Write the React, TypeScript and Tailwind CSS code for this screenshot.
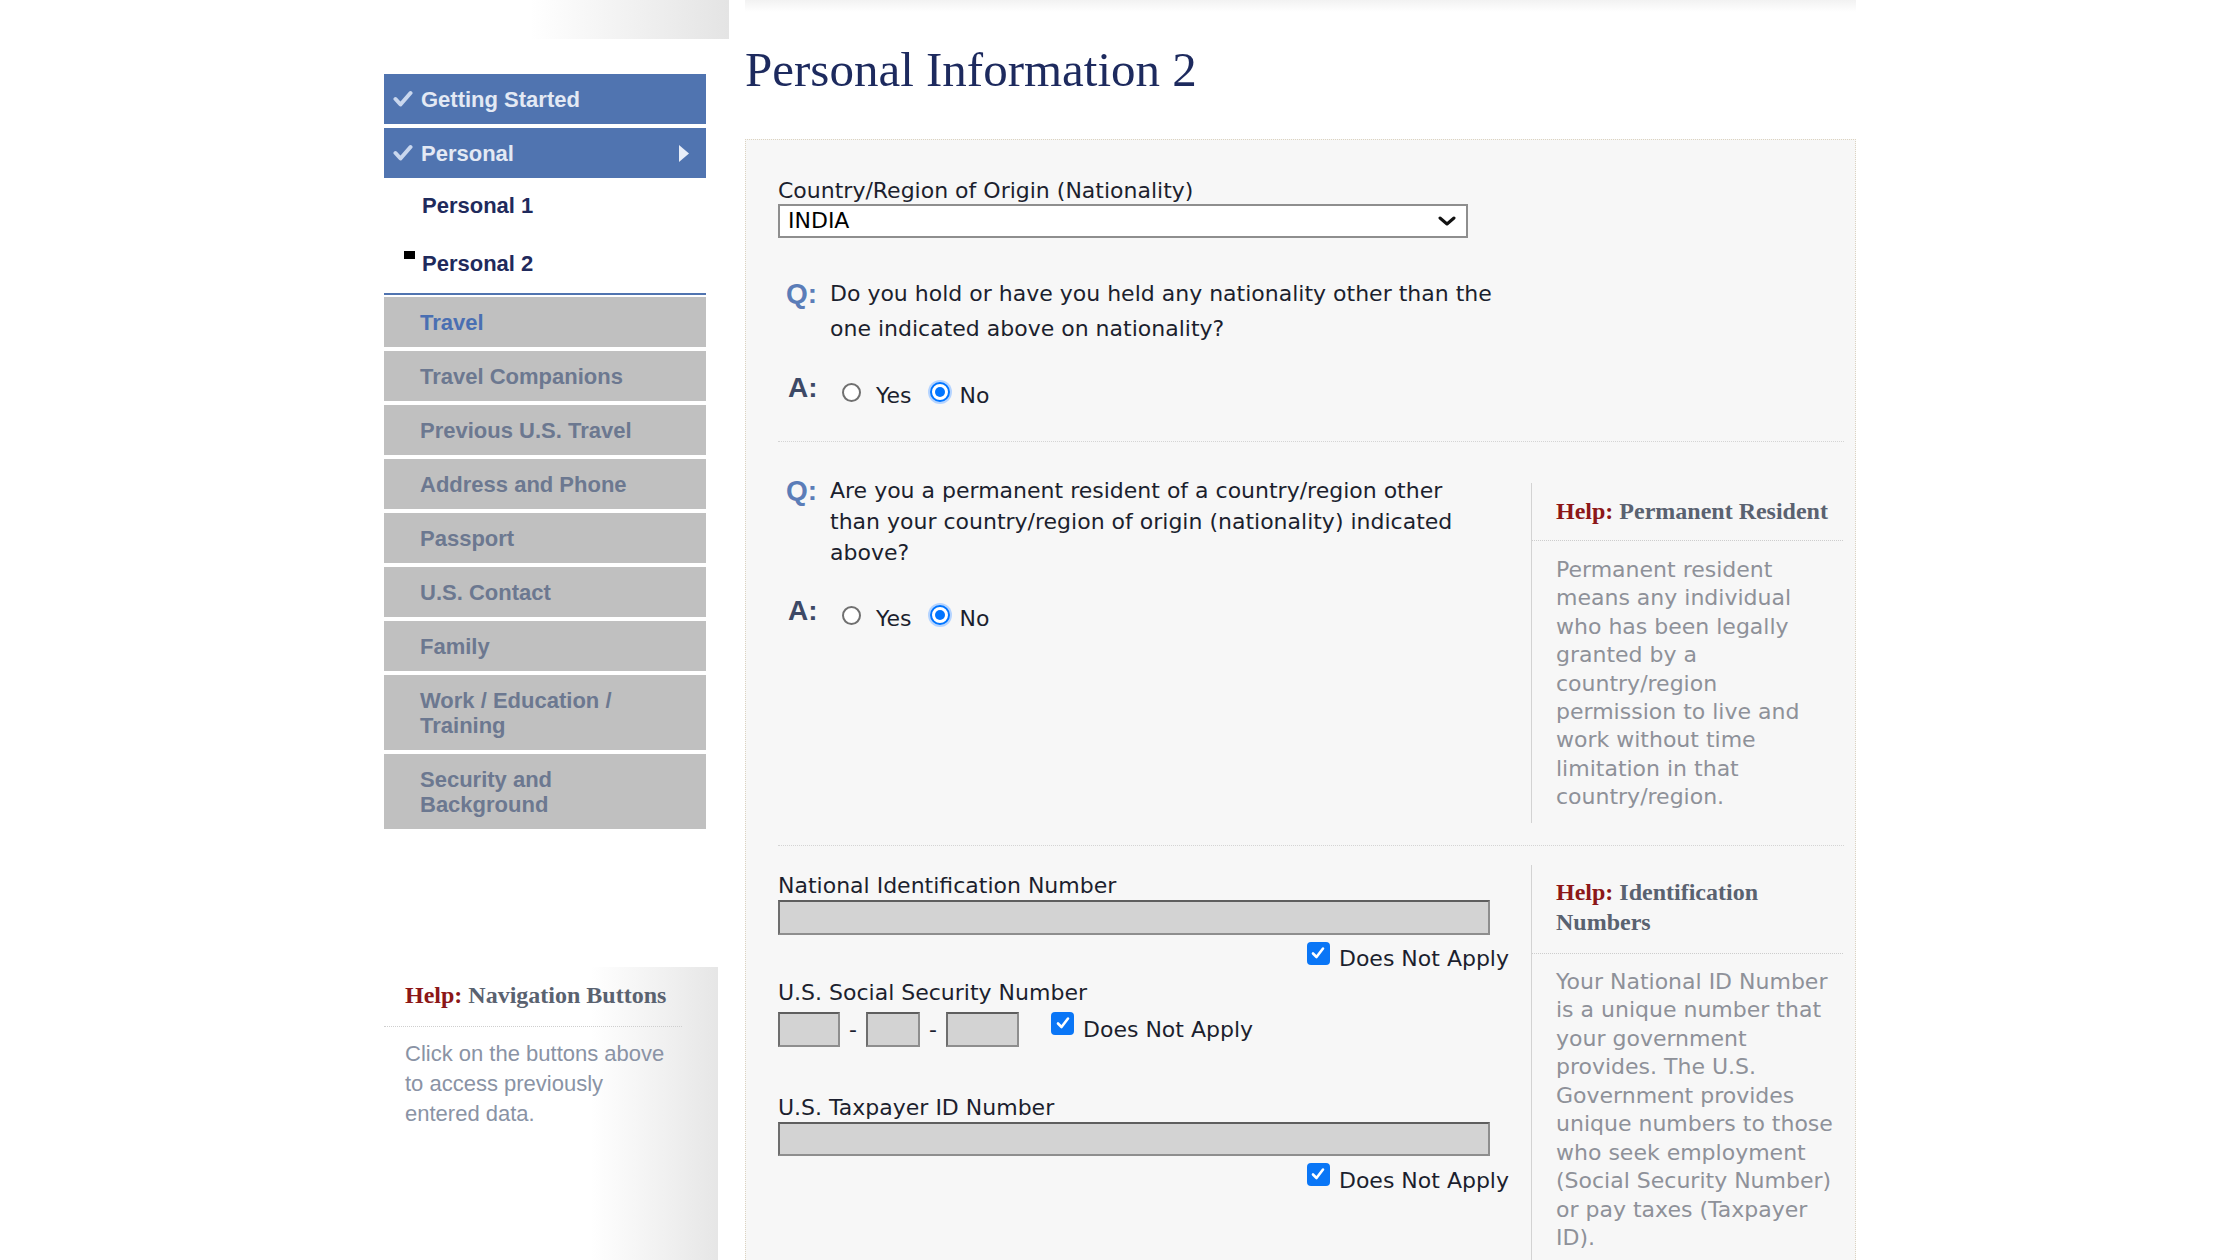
import React from "react";

function Check() {
  return (
    <svg width="20" height="18" viewBox="0 0 20 18" className="shrink-0">
      <path d="M2.5 9 L7.5 14.5 L17.5 3" fill="none" stroke="#c9d7ee" strokeWidth="4" strokeLinecap="round" strokeLinejoin="round" />
    </svg>
  );
}

function BlueBar({ label, arrow }: { label: string; arrow?: boolean }) {
  return (
    <div className="h-[50px] bg-[#5074b0] flex items-center pl-[9px] pr-[16px]">
      <Check />
      <span className="ml-[8px] text-[#e3e9f4]">{label}</span>
      {arrow && (
        <svg width="12" height="19" viewBox="0 0 12 19" className="ml-auto">
          <path d="M1 1 L11 9.5 L1 18 Z" fill="#e8eef8" />
        </svg>
      )}
    </div>
  );
}

function GrayBar({ label, active, tall }: { label: string; active?: boolean; tall?: boolean }) {
  return (
    <div
      className={
        (tall ? "h-[75px]" : "h-[50px]") +
        " bg-[#c0c0c0] flex items-center pl-[36px]"
      }
    >
      <span className={"max-w-[240px] leading-[25px] " + (active ? "text-[#4a6fb2]" : "text-[#6c7890]")}>{label}</span>
    </div>
  );
}

function HelpTitle({ title, className }: { title: string; className?: string }) {
  return (
    <div className={"font-['Liberation_Serif',serif] font-bold text-[24px] leading-[30px] " + (className || "")}>
      <span className="text-[#8c1717]">Help:</span> <span className="text-[#5a6270]">{title}</span>
    </div>
  );
}

function HelpBox({ title, text, className, textLeading }: { title: string; text: string; className?: string; textLeading: string }) {
  return (
    <div className={"w-[312px] border-l border-[#d3d3d3] " + (className || "")}>
      <div className="pl-[24px] border-b border-dotted border-[#cdcdcd]">
        <HelpTitle title={title} className="pt-[13px] pb-[14px]" />
      </div>
      <div className={"pl-[24px] mt-[15px] pb-[11px] text-[22px] text-[#8e9199] " + textLeading}>{text}</div>
    </div>
  );
}

function Radio({ checked }: { checked?: boolean }) {
  if (checked) {
    return (
      <span className="w-[20px] h-[20px] rounded-full border-2 border-[#0075ff] bg-white flex items-center justify-center shrink-0 shadow-[0_0_0_2px_#b5d4ff]">
        <span className="w-[10px] h-[10px] rounded-full bg-[#0075ff]" />
      </span>
    );
  }
  return <span className="w-[19px] h-[19px] rounded-full border-2 border-[#707070] bg-white shrink-0" />;
}

function AnswerRow({ className }: { className?: string }) {
  return (
    <div className={"flex items-center h-[30px] " + (className || "")}>
      <div className="w-[52px] pl-[10px] mb-[9px] font-['Liberation_Sans',Arial,sans-serif] font-bold text-[28px] leading-[30px] text-[#3d4966]">A:</div>
      <div className="ml-[12px] flex items-center">
        <Radio />
      </div>
      <span className="ml-[15px] mt-[8px] leading-[30px]">Yes</span>
      <div className="ml-[18px] flex items-center">
        <Radio checked />
      </div>
      <span className="ml-[10px] mt-[8px] leading-[30px]">No</span>
    </div>
  );
}

function Question({ text, leading, className }: { text: string; leading: string; className?: string }) {
  return (
    <div className={"flex " + (className || "")}>
      <div className={"w-[52px] pl-[8px] font-['Liberation_Sans',Arial,sans-serif] font-bold text-[28px] text-[#5b7db8] shrink-0 " + leading}>Q:</div>
      <div className={"w-[668px] " + leading}>{text}</div>
    </div>
  );
}

function Box({ w, h }: { w: string; h: string }) {
  return <div className={w + " " + h + " bg-[#d3d3d3] border-2 border-[#8e8e8e] border-t-[#5e5e5e] border-l-[#6e6e6e] shrink-0"} />;
}

function CheckBox() {
  return (
    <span className="w-[23px] h-[23px] rounded-[4px] bg-[#0a76f6] flex items-center justify-center shrink-0">
      <svg width="16" height="16" viewBox="0 0 16 16">
        <path d="M3 8.5 L6.5 12 L13 3.5" fill="none" stroke="white" strokeWidth="2.6" strokeLinecap="round" strokeLinejoin="round" />
      </svg>
    </span>
  );
}

function DNA({ className, textMt }: { className?: string; textMt: string }) {
  return (
    <div className={"flex items-start " + (className || "")}>
      <CheckBox />
      <span className={"ml-[9px] leading-[26px] " + textMt}>Does Not Apply</span>
    </div>
  );
}

export default function App() {
  return (
    <div className="h-[1260px] overflow-hidden bg-white">
      <div className="w-[1472px] mx-auto flex gap-[16px] h-full">
        {/* Left column */}
        <div className="w-[345px] shrink-0 flex flex-col font-['Liberation_Sans',Arial,sans-serif] text-[22px] font-bold">
          <div className="ml-[146px] w-[199px] h-[39px] shrink-0 bg-gradient-to-r from-white to-[#e4e4e4]" />
          <nav className="mt-[35px] w-[322px] flex flex-col shrink-0">
            <BlueBar label="Getting Started" />
            <div className="mt-[4px]">
              <BlueBar label="Personal" arrow />
            </div>
            <div className="mt-[15px] ml-[38px] leading-[26px] text-[#1f2a5c]">Personal 1</div>
            <div className="mt-[32px] flex items-start">
              <div className="ml-[20px] w-[11px] h-[8px] bg-black shrink-0" />
              <span className="ml-[7px] leading-[26px] text-[#1f2a5c]">Personal 2</span>
            </div>
            <div className="mt-[16px] h-[2px] bg-[#5074b0]" />
            <div className="mt-[2px] flex flex-col gap-[4px]">
              <GrayBar label="Travel" active />
              <GrayBar label="Travel Companions" />
              <GrayBar label="Previous U.S. Travel" />
              <GrayBar label="Address and Phone" />
              <GrayBar label="Passport" />
              <GrayBar label="U.S. Contact" />
              <GrayBar label="Family" />
              <GrayBar label="Work / Education / Training" tall />
              <GrayBar label="Security and Background" tall />
            </div>
          </nav>
          <div className="mt-[138px] w-[334px] flex-1 bg-gradient-to-r from-white from-[62%] to-[#e6e6e6] font-normal">
            <div className="pl-[21px] mr-[36px] border-b border-dotted border-[#cfcfcf]">
              <HelpTitle title="Navigation Buttons" className="pt-[13px] pb-[16px]" />
            </div>
            <div className="pl-[21px] mt-[12px] w-[293px] leading-[30px] text-[#8a93a5]">
              Click on the buttons above to access previously entered data.
            </div>
          </div>
        </div>

        {/* Right column */}
        <div className="w-[1111px] shrink-0 flex flex-col">
          <div className="h-[12px] shrink-0 bg-gradient-to-b from-[#f2f2f2] to-white" />
          <h1 className="mt-[34px] shrink-0 text-[49px] leading-[48px] font-['Liberation_Serif',serif] text-[#1d2a5e]">Personal Information 2</h1>
          <div className="mt-[45px] flex-1 shrink-0 bg-[#f7f7f7] border border-dotted border-[#dcd3c0] pt-[38px] pl-[32px] pr-[11px] font-['DejaVu_Sans',Verdana,sans-serif] text-[22px] text-[#1c1f2e]">
            {/* Section 1 */}
            <div className="leading-[26px]">Country/Region of Origin (Nationality)</div>
            <div className="w-[690px] h-[34px] border-2 border-[#8e8e8e] bg-white flex items-center justify-between pl-[8px] pr-[10px]">
              <span className="leading-[26px] text-black">INDIA</span>
              <svg width="18" height="10" viewBox="0 0 18 10">
                <path d="M2 2 L9 8 L16 2" fill="none" stroke="#111" strokeWidth="3" strokeLinecap="round" strokeLinejoin="round" />
              </svg>
            </div>
            <Question
              className="mt-[38px]"
              leading="leading-[35px]"
              text="Do you hold or have you held any nationality other than the one indicated above on nationality?"
            />
            <AnswerRow className="mt-[31px]" />

            {/* Section 2 */}
            <div className="mt-[34px] border-t border-dotted border-[#d4d4d4] flex items-start pb-[22px]">
              <div className="w-[753px] shrink-0 pt-[33px]">
                <Question
                  leading="leading-[31px]"
                  text="Are you a permanent resident of a country/region other than your country/region of origin (nationality) indicated above?"
                />
                <AnswerRow className="mt-[32px]" />
              </div>
              <HelpBox
                className="mt-[41px]"
                title="Permanent Resident"
                textLeading="leading-[28.4px]"
                text="Permanent resident means any individual who has been legally granted by a country/region permission to live and work without time limitation in that country/region."
              />
            </div>

            {/* Section 3 */}
            <div className="border-t border-dotted border-[#d4d4d4] flex items-start">
              <div className="w-[731px] shrink-0 pt-[27px]">
                <div className="leading-[26px]">National Identification Number</div>
                <Box w="w-[712px]" h="h-[35px] mt-[1px]" />
                <DNA className="mt-[7px] justify-end" textMt="mt-[4px]" />
                <div className="mt-[8px] leading-[26px]">U.S. Social Security Number</div>
                <div className="mt-[6px] flex items-start">
                  <Box w="w-[62px]" h="h-[35px]" />
                  <span className="w-[26px] text-center leading-[35px]">-</span>
                  <Box w="w-[54px]" h="h-[35px]" />
                  <span className="w-[26px] text-center leading-[35px]">-</span>
                  <Box w="w-[73px]" h="h-[35px]" />
                  <DNA className="ml-[32px]" textMt="mt-[5px]" />
                </div>
                <div className="mt-[48px] leading-[26px]">U.S. Taxpayer ID Number</div>
                <Box w="w-[712px]" h="h-[34px] mt-[1px]" />
                <DNA className="mt-[7px] justify-end" textMt="mt-[5px]" />
              </div>
              <div className="ml-[22px]">
                <div className="w-[312px] mt-[19px] border-l border-[#d3d3d3] pb-[40px]">
                  <div className="pl-[24px] border-b border-dotted border-[#cdcdcd]">
                    <HelpTitle title="Identification Numbers" className="pt-[12px] pb-[16px]" />
                  </div>
                  <div className="pl-[24px] mt-[14px] text-[22px] leading-[28.5px] text-[#8e9199]">
                    Your National ID Number is a unique number that your government provides. The U.S. Government provides unique numbers to those who seek employment (Social Security Number) or pay taxes (Taxpayer ID).
                  </div>
                </div>
              </div>
            </div>
          </div>
        </div>
      </div>
    </div>
  );
}
